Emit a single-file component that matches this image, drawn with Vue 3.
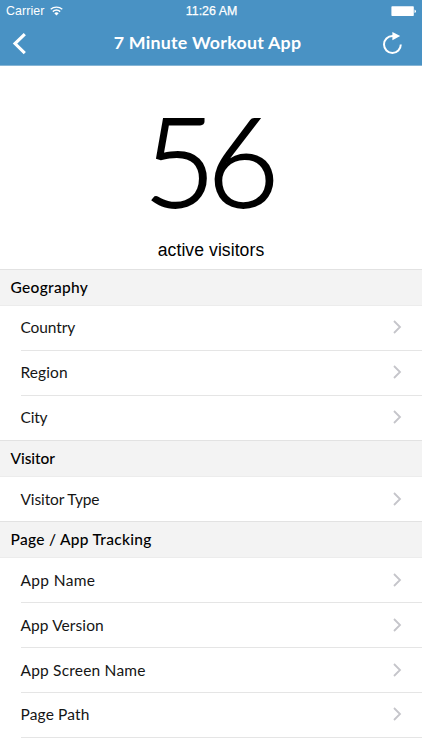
<script setup>
// Each label carries its own tracking, in pixels.
const sections = [
  { title: 'Geography', tracking: 0.32, rows: [['Country', -0.1], ['Region', 0.1], ['City', -0.2]] },
  { title: 'Visitor', tracking: -0.1, rows: [['Visitor Type', -0.13]] },
  { title: 'Page / App Tracking', tracking: 0.29, rows: [['App Name', 0.35], ['App Version', 0.1], ['App Screen Name', 0.2], ['Page Path', 0.15], ['', 0]] },
]
</script>

<template>
  <div class="screen">
    <header class="top">
      <div class="status">
        <div class="carrier">
          <span>Carrier</span>
          <svg class="wifi" width="13" height="10" viewBox="0 0 13 10">
            <path d="M.7 3.3C4 .4 9 .4 12.3 3.3M2.8 5.6C5 3.8 8 3.8 10.2 5.6" fill="none" stroke="#fff" stroke-width="1.4" />
            <path d="M4.3 7.2Q6.5 5.5 8.7 7.2L6.5 9.5Z" fill="#fff" />
          </svg>
        </div>
        <span class="time">11:26 AM</span>
        <svg class="battery" width="26" height="11" viewBox="0 0 26 11">
          <rect x="0.4" y="0.2" width="22.4" height="9.8" rx="0.8" fill="#fff" />
          <path d="M23.5 3.4Q25 3.8 25 5.2Q25 6.6 23.5 7Z" fill="#fff" />
        </svg>
      </div>
      <div class="nav">
        <svg class="back" width="15" height="22" viewBox="0 0 15 22">
          <path d="M12.8 1.1L3 10.6L12.8 20.1" fill="none" stroke="#fff" stroke-width="3.1" />
        </svg>
        <h1>7 Minute Workout App</h1>
        <svg class="reload" width="20" height="24" viewBox="0 0 20 24">
          <path d="M10.5 4.1H9.4A8.4 8.4 0 1 0 17.8 12.5" fill="none" stroke="#fff" stroke-width="2" />
          <path d="M9.4 0L17.2 4L9.4 8.2Z" fill="#fff" />
        </svg>
      </div>
    </header>
    <section class="hero">
      <div class="count">56</div>
      <div class="caption">active visitors</div>
    </section>
    <section v-for="s in sections" :key="s.title">
      <h2 :style="{ letterSpacing: s.tracking + 'px' }">{{ s.title }}</h2>
      <ul>
        <li v-for="[label, tracking] in s.rows" :key="label">
          <span :style="{ letterSpacing: tracking + 'px' }">{{ label }}</span>
          <svg width="10" height="16" viewBox="0 0 10 16">
            <path d="M1 2L7 8L1 14" fill="none" stroke="#c5c5ca" stroke-width="1.8" />
          </svg>
        </li>
      </ul>
    </section>
  </div>
</template>

<style>
body { margin: 0; }
</style>

<style scoped>
.screen { width: 422px; height: 750px; overflow: hidden; background: #fff; color: #000; font-family: Lato, sans-serif; }
.top { height: 65px; background: #4992c4; border-bottom: 1px solid #86b5d5; color: #fff; }
.status { height: 22px; display: grid; grid-template-columns: 1fr auto 1fr; align-items: center; padding: 0 5px 0 6px; font: 12.4px/22px "Liberation Sans", sans-serif; }
.carrier { display: flex; align-items: center; gap: 5px; letter-spacing: .1px; }
.wifi { margin-top: -1px; }
.time { -webkit-text-stroke: .25px #fff; }
.battery { justify-self: end; }
.nav { height: 43px; display: grid; grid-template-columns: 40px 1fr 40px; align-items: center; padding: 0 19px 0 12px; }
h1 { margin: 0; padding-bottom: 2px; text-align: center; font-size: 17.8px; font-weight: 700; line-height: 41px; letter-spacing: .24px; }
.reload { justify-self: end; }
.hero { height: 203px; text-align: center; }
.count { height: 168px; box-sizing: border-box; font-size: 125px; font-weight: 300; line-height: 187px; letter-spacing: -9px; padding-right: 8px; -webkit-text-stroke: 1.8px #000; }
.caption { font: 17.6px/32px "Liberation Sans", sans-serif; letter-spacing: .06px; }
h2 { margin: 0; box-sizing: border-box; height: 36.6px; padding-left: 10.5px; background: #f3f3f3; border-top: 1px solid #e2e2e2; border-bottom: 1px solid #ececec; font-size: 15.5px; line-height: 34px; font-weight: 500; }
ul { margin: 0; padding: 0 0 0 20.5px; list-style: none; }
li { box-sizing: border-box; height: 44.8px; display: flex; align-items: center; justify-content: space-between; padding: 0 19px .8px 0; border-bottom: 1px solid #e5e5e5; font-size: 15.5px; color: #151515; }
li:first-child { height: 45.3px; }
li:last-child { height: 44.3px; border-bottom: 0; }
li:only-child { height: 44.8px; }
</style>
